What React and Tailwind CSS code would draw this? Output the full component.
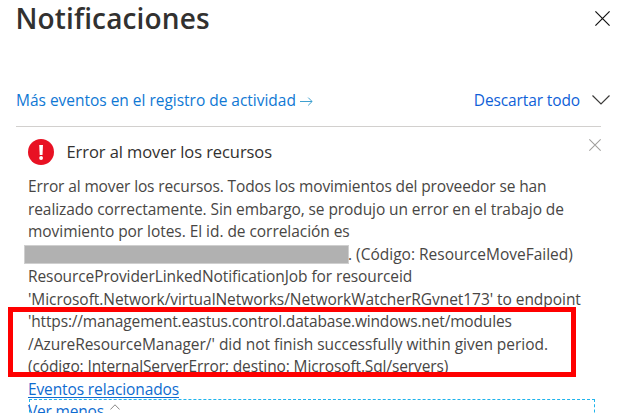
function CloseIcon({ className }) {
  return (
    <svg viewBox="0 0 15 15" fill="none" stroke="currentColor" className={className}>
      <path d="M0.4 0.4 14.6 14.6M14.6 0.4 0.4 14.6" />
    </svg>
  );
}

function Header() {
  return (
    <header className="flex h-[84px] items-start justify-between pr-[14px] pl-[15.5px]">
      <h1 className="text-[28px] leading-[36px] font-semibold tracking-[0.13px] text-[#323130]">
        Notificaciones
      </h1>
      <CloseIcon className="mt-[11px] size-[15px] stroke-[1.2] text-[#111]" />
    </header>
  );
}

function Toolbar() {
  return (
    <div className="ml-4 flex h-[43px] w-[585px] border-b border-[#d2d0ce]">
      <a className="mt-[5px] flex h-[22px] items-center leading-[22px] tracking-[-0.02px] text-[#0f78d4]">
        <span>Más eventos en el registro de actividad</span>
        <svg viewBox="0 0 13 9" fill="none" stroke="#3fa0cf" className="mt-[3px] ml-[4px] h-[9px] w-[13px]">
          <path d="M0 4.5h12M8.2 0.6l3.9 3.9-3.9 3.9" />
        </svg>
      </a>
      <a className="mt-[5px] ml-auto h-[22px] leading-[22px] tracking-[-0.12px] text-[#0f5fd8]">Descartar todo</a>
      <svg viewBox="0 0 18 10" fill="none" stroke="#3b3a39" className="mt-[11px] mr-[-9px] ml-[12px] h-[10px] w-[18px] shrink-0">
        <path d="M0.5 0.5 9 9 17.5 0.5" strokeWidth="1.2" />
      </svg>
    </div>
  );
}

function ErrorIcon() {
  return (
    <svg viewBox="0 0 26 26" className="mt-[12px] size-[26px] shrink-0">
      <circle cx="13" cy="13" r="13" fill="#e81123" />
      <path d="M11.2 6h3.8l-0.5 10h-2.8z" fill="#fff" />
      <circle cx="13.1" cy="19" r="1.9" fill="#fff" />
    </svg>
  );
}

export default function App() {
  return (
    <div className="relative h-[413px] w-[624px] overflow-hidden bg-white font-['Open_Sans','Noto_Sans',sans-serif] text-[15.5px] text-[#484644]">
      <Header />
      <Toolbar />
      <div className="flex h-[48px] items-start pl-[28px]">
        <ErrorIcon />
        <h2 className="mt-[13px] ml-[12.5px] text-[16.5px] leading-[24px] tracking-[-0.08px] text-[#323130]">Error al mover los recursos</h2>
        <CloseIcon className="mt-[12px] mr-[23px] ml-auto size-[12px] stroke-[1.3] text-[#a19f9d]" />
      </div>
      <div className="ml-[28px] leading-[22.5px] whitespace-nowrap">
        <div className="tracking-[-0.125px]">Error al mover los recursos. Todos los movimientos del proveedor se han</div>
        <div className="tracking-[-0.09px]">realizado correctamente. Sin embargo, se produjo un error en el trabajo de</div>
        <div className="tracking-[-0.05px]">movimiento por lotes. El id. de correlación es</div>
        <div className="ml-[-4px] flex h-[22.5px] items-center">
          <span className="mt-[2px] h-[19px] w-[325px] border border-[#cfcfcf] bg-[#b1b1b1]" />
          <span className="ml-[-1px]">. (Código: ResourceMoveFailed)</span>
        </div>
        <div className="tracking-[-0.09px]">ResourceProviderLinkedNotificationJob for resourceid</div>
        <div className="tracking-[-0.05px]">'Microsoft.Network/virtualNetworks/NetworkWatcherRGvnet173' to endpoint</div>
        <div className="tracking-[-0.155px]">'https://management.eastus.control.database.windows.net/modules</div>
        <div className="tracking-[-0.025px]">/AzureResourceManager/' did not finish successfully within given period.</div>
        <div className="tracking-[-0.12px]">(código: InternalServerError; destino: Microsoft.Sql/servers)</div>
        <a className="block h-[21.5px] w-fit tracking-[-0.12px] text-[#0f6cd0] underline decoration-1 underline-offset-2">
          Eventos relacionados
        </a>
        <div className="ml-[1px] flex h-[24px] w-[566px] border border-dashed border-[#1fb4ec] text-[#0f6cd0]">
          <a className="ml-[-2px] tracking-[-0.18px]">Ver menos</a>
          <svg viewBox="0 0 10 6" fill="none" stroke="#8a8886" className="mt-[4px] ml-[6px] h-[6px] w-[10px]">
            <path d="M0.4 5.5 5 0.8 9.6 5.5" />
          </svg>
        </div>
      </div>
      <div className="absolute top-[307px] left-[8px] h-[70px] w-[568px] border-5 border-[#ff0000]" />
    </div>
  );
}
